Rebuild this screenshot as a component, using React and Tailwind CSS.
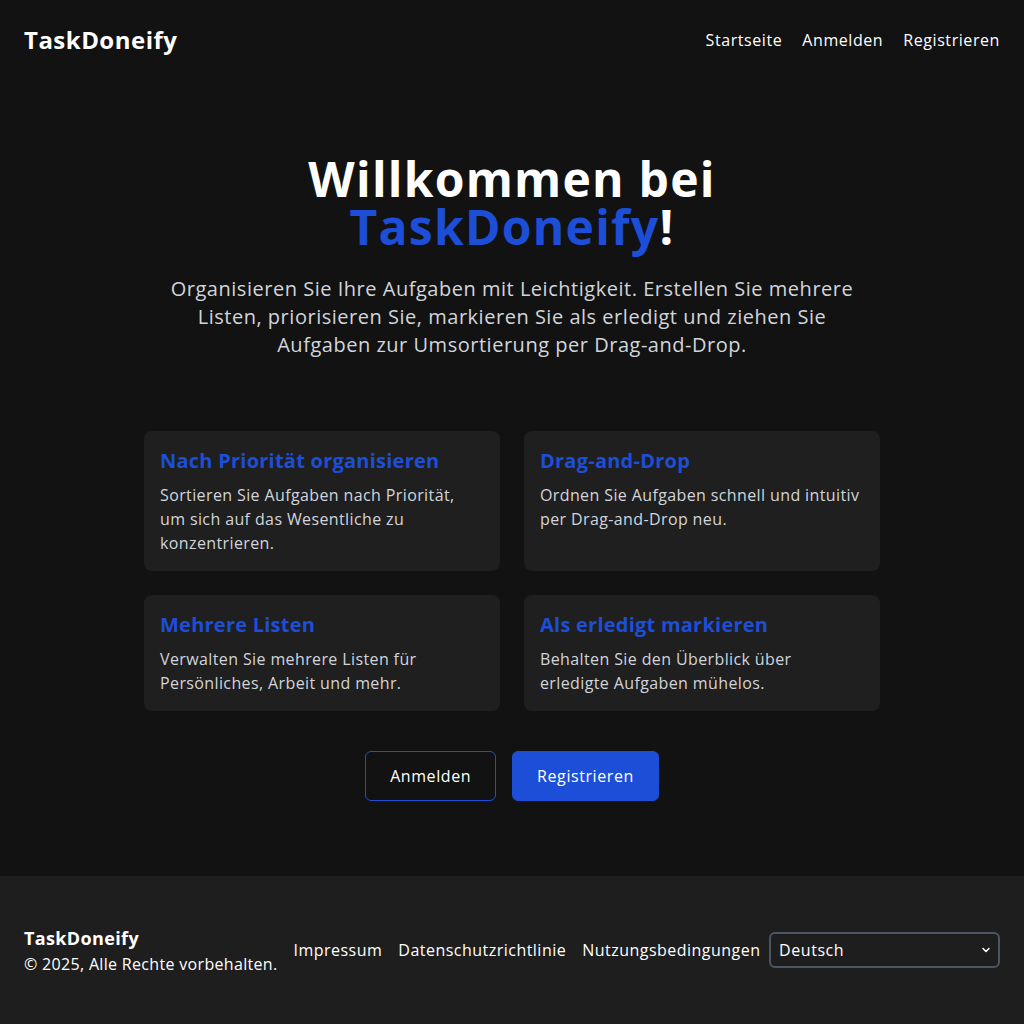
import React, { useState } from "react";
import { ChevronDown } from "lucide-react";

const features = [
  {
    title: "Nach Priorität organisieren",
    text: "Sortieren Sie Aufgaben nach Priorität, um sich auf das Wesentliche zu konzentrieren.",
  },
  {
    title: "Drag-and-Drop",
    text: "Ordnen Sie Aufgaben schnell und intuitiv per Drag-and-Drop neu.",
  },
  {
    title: "Mehrere Listen",
    text: "Verwalten Sie mehrere Listen für Persönliches, Arbeit und mehr.",
  },
  {
    title: "Als erledigt markieren",
    text: "Behalten Sie den Überblick über erledigte Aufgaben mühelos.",
  },
];

const App = () => {
  const [lang, setLang] = useState("de");

  return (
    <div className="min-h-screen flex flex-col bg-[#121212] text-white tracking-[0.036em] font-['Open_Sans',sans-serif]">
      {/* Header */}
      <header className="h-20 px-6 flex items-center justify-between">
        <a href="#" className="text-2xl font-bold tracking-[0.02em]">
          TaskDoneify
        </a>
        <nav className="flex items-center gap-5 text-base">
          <a href="#">Startseite</a>
          <a href="#">Anmelden</a>
          <a href="#">Registrieren</a>
        </nav>
      </header>

      {/* Hero */}
      <main className="flex-1 flex flex-col items-center justify-center px-6">
        <h1 className="text-5xl leading-[48px] font-bold text-center tracking-[0.026em]">
          Willkommen bei
          <br />
          <span className="text-[#1d4ed8]">TaskDoneify</span>!
        </h1>
        <p className="mt-6 text-xl leading-7 text-center text-[#d1d5db] tracking-[0.026em]">
          Organisieren Sie Ihre Aufgaben mit Leichtigkeit. Erstellen Sie mehrere
          <br />
          Listen, priorisieren Sie, markieren Sie als erledigt und ziehen Sie
          <br />
          Aufgaben zur Umsortierung per Drag-and-Drop.
        </p>

        {/* Features */}
        <div className="mt-[72px] w-[736px] grid grid-cols-2 gap-6">
          {features.map((f) => (
            <div key={f.title} className="bg-[#1f1f1f] rounded-lg p-4">
              <h3 className="text-xl leading-7 font-bold text-[#1d4ed8] mb-2 tracking-[0.012em]">
                {f.title}
              </h3>
              <p className="text-base leading-6 text-[#d1d5db] tracking-[0.024em]">
                {f.text}
              </p>
            </div>
          ))}
        </div>

        {/* Actions */}
        <div className="mt-10 flex items-center gap-4">
          <a
            href="#"
            className="px-6 py-3 leading-6 border border-[#1d4ed8] rounded-md text-white"
          >
            Anmelden
          </a>
          <a
            href="#"
            className="px-6 py-3 leading-6 border border-[#1d4ed8] bg-[#1d4ed8] rounded-md text-white"
          >
            Registrieren
          </a>
        </div>
      </main>

      {/* Footer */}
      <footer className="bg-[#1e1e1e] px-6 py-12 flex items-center">
        <div className="shrink-0 whitespace-nowrap">
          <p className="text-lg leading-7 font-bold tracking-[0.02em]">TaskDoneify</p>
          <p className="text-base leading-6 tracking-[0.02em]">
            © 2025, Alle Rechte vorbehalten.
          </p>
        </div>
        <nav className="ml-4 flex items-center gap-4 text-base whitespace-nowrap tracking-[0.03em]">
          <a href="#">Impressum</a>
          <a href="#">Datenschutzrichtlinie</a>
          <a href="#">Nutzungsbedingungen</a>
        </nav>
        <div className="relative ml-auto w-[231px] shrink-0">
          <select
            value={lang}
            onChange={(e) => setLang(e.target.value)}
            className="appearance-none w-full h-9 pl-2 pr-6 bg-[#1e1e1e] border-2 border-[#4b5563] rounded-md text-base text-white"
          >
            <option value="de">Deutsch</option>
            <option value="en">English</option>
          </select>
          <ChevronDown
            className="absolute right-2 top-1/2 -translate-y-1/2 w-3 h-3 text-white pointer-events-none"
            strokeWidth={3}
          />
        </div>
      </footer>
    </div>
  );
};

export default App;
